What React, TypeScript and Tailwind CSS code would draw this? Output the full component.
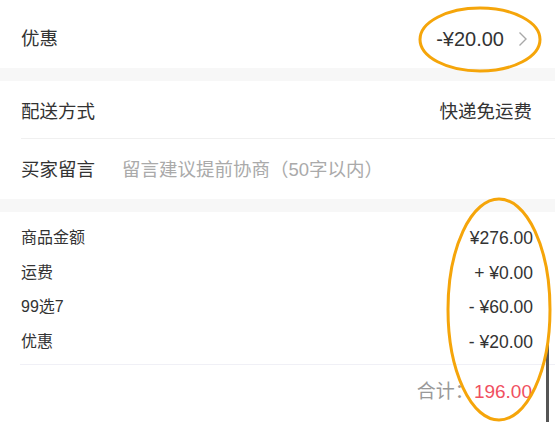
import React from 'react';

const font = { fontFamily: '"Liberation Sans", "Noto Sans CJK SC", sans-serif' };

const summary = [
  { label: '商品金额', value: '¥276.00' },
  { label: '运费', value: '+ ¥0.00' },
  { label: '99选7', value: '- ¥60.00' },
  { label: '优惠', value: '- ¥20.00' },
];

export default function App() {
  return (
    <div className="relative w-[555px] h-[422px] overflow-hidden bg-white text-[#333]" style={font}>
      {/* coupon row */}
      <div className="flex h-[68px] items-center justify-between pl-[21px] pr-[27px] pt-[10px] text-[18.5px]">
        <span>优惠</span>
        <div className="flex items-center gap-[14px]">
          <span className="text-[20px]">-¥20.00</span>
          <svg width="10" height="16" viewBox="0 0 10 16" fill="none">
            <path d="M1.5 1.5 L8 8 L1.5 14.5" stroke="#a8a8a8" strokeWidth="1.4" />
          </svg>
        </div>
      </div>
      <div className="h-[13px] bg-[#f7f7f7]" />

      {/* delivery + message */}
      <div className="pl-[21px]">
        <div className="flex h-[58px] items-center justify-between border-b border-[#f0f0f0] pr-[23px] pt-[4px] text-[18.5px]">
          <span>配送方式</span>
          <span>快递免运费</span>
        </div>
        <div className="flex h-[60px] items-center gap-[27px] pt-[2px] text-[18.5px]">
          <span>买家留言</span>
          <span className="text-[#aaa]">留言建议提前协商（50字以内）</span>
        </div>
      </div>
      <div className="h-[13px] bg-[#f7f7f7]" />

      {/* summary */}
      <div className="pl-[21px] pr-[22px] pt-[9px]">
        {summary.map((r) => (
          <div key={r.label} className="flex h-[34.6px] items-center justify-between">
            <span className="text-[16px]">{r.label}</span>
            <span className="text-[17.5px]">{r.value}</span>
          </div>
        ))}
      </div>
      <div className="ml-[20px] mt-[5px] border-t border-[#f0f0f6]" />
      <div className="flex h-[54px] items-center justify-end pr-[23px] text-[19px]">
        <span className="text-[#999]">合计：</span>
        <span className="text-[#f0505f]">196.00</span>
      </div>

      {/* scrollbar */}
      <div className="absolute left-[546px] top-[344px] h-[80px] w-[3px] bg-[#555]" />

      {/* annotation ellipses */}
      <svg className="absolute left-0 top-0" width="555" height="422" viewBox="0 0 555 422" fill="none">
        <ellipse cx="480" cy="39.5" rx="60" ry="31.5" stroke="#f5a50a" strokeWidth="3" />
        <ellipse cx="499" cy="309.5" rx="51" ry="110.5" stroke="#f5a50a" strokeWidth="3" />
      </svg>
    </div>
  );
}
